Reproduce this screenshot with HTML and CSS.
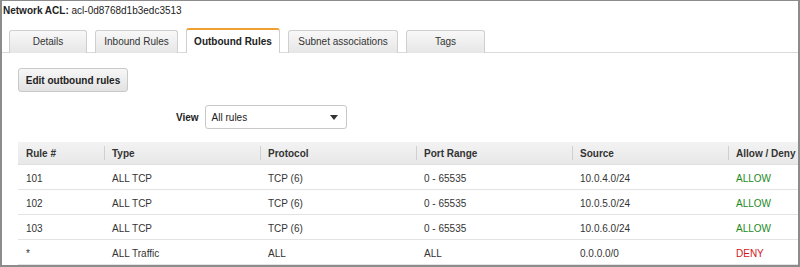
FILE: index.html
```html
<!DOCTYPE html>
<html lang="en">
<head>
<meta charset="UTF-8">
<title>Network ACL</title>
<link rel="stylesheet" href="styles.css">
</head>
<body>
<div class="frame">
  <div class="title"><b>Network ACL:</b> acl-0d8768d1b3edc3513</div>

  <div class="tabs">
    <div class="tab tab-details">Details</div>
    <div class="tab tab-inbound">Inbound Rules</div>
    <div class="tab tab-outbound active">Outbound Rules</div>
    <div class="tab tab-subnet">Subnet associations</div>
    <div class="tab tab-tags">Tags</div>
  </div>

  <div class="panel">
    <button class="btn">Edit outbound rules</button>

    <div class="view-row">
      <span class="view-label">View</span>
      <div class="select">
        <span>All rules</span>
        <span class="caret"></span>
      </div>
    </div>

    <table class="rules">
      <thead>
        <tr>
          <th class="c-rule">Rule #</th>
          <th>Type</th>
          <th>Protocol</th>
          <th>Port Range</th>
          <th>Source</th>
          <th>Allow / Deny</th>
        </tr>
      </thead>
      <tbody>
        <tr><td>101</td><td>ALL TCP</td><td>TCP (6)</td><td>0 - 65535</td><td>10.0.4.0/24</td><td class="allow">ALLOW</td></tr>
        <tr><td>102</td><td>ALL TCP</td><td>TCP (6)</td><td>0 - 65535</td><td>10.0.5.0/24</td><td class="allow">ALLOW</td></tr>
        <tr><td>103</td><td>ALL TCP</td><td>TCP (6)</td><td>0 - 65535</td><td>10.0.6.0/24</td><td class="allow">ALLOW</td></tr>
        <tr><td>*</td><td>ALL Traffic</td><td>ALL</td><td>ALL</td><td>0.0.0.0/0</td><td class="deny">DENY</td></tr>
      </tbody>
    </table>
  </div>
</div>
</body>
</html>
```

FILE: styles.css
```css
body {
  margin: 0;
  font-family: "Liberation Sans", Arial, sans-serif;
  color: #222;
  background: #fff;
}
.frame {
  width: 796px;
  height: 264px;
  border: 2px solid #8c8c8c;
  border-top-width: 1px;
  overflow: hidden;
}
.title {
  font-size: 10px;
  padding: 4px 0 0 1px;
  height: 24px;
  box-sizing: border-box;
}

/* tabs */
.tabs {
  display: flex;
  align-items: flex-end;
  gap: 8px;
  padding-left: 7px;
  height: 27px;
  border-bottom: 1px solid #d9d9d9;
}
.tab {
  height: 22px;
  line-height: 21px;
  font-size: 10px;
  color: #333;
  text-align: center;
  white-space: nowrap;
  border: 1px solid #cfcfcf;
  border-bottom: none;
  border-radius: 3px 3px 0 0;
  background: linear-gradient(#f8f8f8, #e6e6e6);
  margin-bottom: -1px;
}
.tab-details { width: 76px; }
.tab-inbound { width: 81px; }
.tab-outbound { width: 92px; }
.tab-subnet { width: 108px; }
.tab-tags { width: 77px; }
.tab.active {
  background: #fff;
  border-top: 2px solid #f0a030;
  height: 23px;
  line-height: 24px;
  font-weight: bold;
  color: #222;
}

/* panel */
.panel {
  padding: 15px 0 0 16px;
}
.btn {
  display: block;
  width: 110px;
  height: 24px;
  padding: 0;
  font-family: "Liberation Sans", Arial, sans-serif;
  font-size: 10px;
  font-weight: bold;
  color: #222;
  border: 1px solid #c9c9c9;
  border-radius: 3px;
  background: linear-gradient(#f7f7f7, #e2e2e2);
}
.view-row {
  display: flex;
  align-items: center;
  gap: 6px;
  margin: 13px 0 0 158px;
}
.view-label {
  font-size: 10px;
  font-weight: bold;
}
.select {
  width: 142px;
  height: 24px;
  border: 1px solid #c8c8c8;
  border-radius: 3px;
  display: flex;
  align-items: center;
  justify-content: space-between;
  padding: 0 8px 0 6px;
  box-sizing: border-box;
  font-size: 10px;
}
.caret {
  width: 0;
  height: 0;
  border-left: 4px solid transparent;
  border-right: 4px solid transparent;
  border-top: 5px solid #333;
}

/* table */
.rules {
  margin-top: 13px;
  border-collapse: collapse;
  width: 866px;
  table-layout: fixed;
  font-size: 10px;
}
.rules th {
  height: 22px;
  text-align: left;
  font-weight: bold;
  color: #333;
  background: linear-gradient(#f3f3f3, #e8e8e8);
  border-bottom: 1px solid #e0e0e0;
  padding: 0 0 0 8px;
  width: 148px;
  position: relative;
}
.rules th.c-rule {
  width: 78px;
}
.rules th + th::before {
  content: "";
  position: absolute;
  left: 0;
  top: 4px;
  bottom: 4px;
  border-left: 1px solid #cfcfcf;
}
.rules td {
  height: 25px;
  padding: 2px 0 0 8px;
  color: #333;
  border-bottom: 1px solid #e3e3e3;
  box-sizing: border-box;
}
.rules td.allow { color: #1d8a1d; }
.rules td.deny { color: #d0141c; }
```
